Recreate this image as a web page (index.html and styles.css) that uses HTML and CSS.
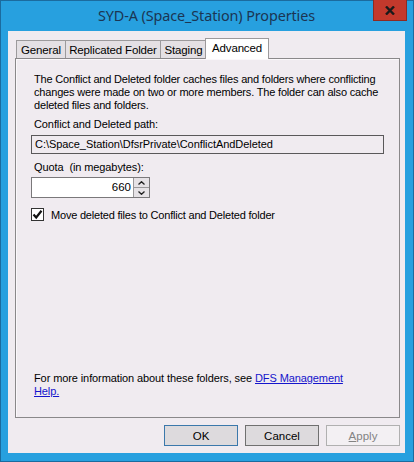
FILE: index.html
```html
<!DOCTYPE html>
<html>
<head>
<meta charset="utf-8">
<link rel="stylesheet" href="styles.css">
</head>
<body>
<div class="window">
  <div class="titlebar">
    <div class="title">SYD-A (Space_Station) Properties</div>
    <div class="close">
      <svg width="10" height="9" viewBox="0 0 10 9"><path d="M1 0.5 L9 8.5 M9 0.5 L1 8.5" stroke="#1a1a1a" stroke-width="2.4" fill="none"/></svg>
    </div>
  </div>
  <div class="client">
    <div class="tabs">
      <div class="tab t-general">General</div>
      <div class="tab t-repl">Replicated Folder</div>
      <div class="tab t-staging">Staging</div>
      <div class="tab active t-adv">Advanced</div>
    </div>
    <div class="panel">
      <p class="desc">The Conflict and Deleted folder caches files and folders where conflicting<br>changes were made on two or more members. The folder can also cache<br>deleted files and folders.</p>
      <div class="label path-label">Conflict and Deleted path:</div>
      <div class="path">C:\Space_Station\DfsrPrivate\ConflictAndDeleted</div>
      <div class="label quota-label">Quota  (in megabytes):</div>
      <div class="spin">
        <div class="spin-input">660</div>
        <div class="spin-btns">
          <div class="spin-btn"><svg width="7" height="4" viewBox="0 0 7 4"><path d="M0.5 3.5 L3.5 0.7 L6.5 3.5" stroke="#222" stroke-width="1.3" fill="none"/></svg></div>
          <div class="spin-btn"><svg width="7" height="4" viewBox="0 0 7 4"><path d="M0.5 0.5 L3.5 3.3 L6.5 0.5" stroke="#222" stroke-width="1.3" fill="none"/></svg></div>
        </div>
      </div>
      <div class="check">
        <span class="box"><svg width="11" height="11" viewBox="0 0 11 11"><path d="M1.5 5.5 L4.2 8.5 L9.5 1.8" stroke="#111" stroke-width="2.2" fill="none"/></svg></span>
        <span class="check-label">Move deleted files to Conflict and Deleted folder</span>
      </div>
      <div class="spacer"></div>
      <p class="footer">For more information about these folders, see <a class="link">DFS Management<br>Help.</a></p>
    </div>
    <div class="buttons">
      <div class="btn default">OK</div>
      <div class="btn">Cancel</div>
      <div class="btn disabled"><u>A</u>pply</div>
    </div>
  </div>
</div>
</body>
</html>
```
FILE: styles.css
```css
html, body {
  margin: 0;
  padding: 0;
  background: #26a0df;
}
.window {
  width: 414px;
  height: 462px;
  box-sizing: border-box;
  background: #27a0df;
  border: 1px solid #1b6b9e;
  padding: 0 8px 0 7px;
  display: flex;
  flex-direction: column;
  font-family: "Liberation Sans", Arial, sans-serif;
  font-size: 11px;
  color: #000;
  white-space: nowrap;
}
.titlebar {
  height: 30px;
  position: relative;
  display: flex;
  align-items: center;
  justify-content: center;
}
.title {
  font-family: "Noto Sans", "Open Sans", sans-serif;
  font-size: 14.4px;
  color: #1b3553;
  margin-top: -2px;
  letter-spacing: -0.1px;
}
.close {
  position: absolute;
  right: -2px;
  top: -1px;
  width: 34px;
  height: 21px;
  box-sizing: border-box;
  background: #c3392c;
  border: 1px solid #8e2a22;
  border-top: none;
  display: flex;
  align-items: center;
  justify-content: center;
}
.client {
  height: 422px;
  background: #f0ebf0;
  display: flex;
  flex-direction: column;
}
.tabs {
  height: 20px;
  margin-top: 7px;
  padding-left: 8px;
  display: flex;
  align-items: flex-end;
}
.tab {
  height: 18px;
  box-sizing: border-box;
  border: 1px solid #9c9a9c;
  border-bottom: none;
  background: #e4e0e4;
  display: flex;
  align-items: center;
  justify-content: center;
  font-size: 11.5px;
  letter-spacing: -0.15px;
  padding-top: 1px;
}
.t-general { width: 50px; }
.t-repl { width: 96px; margin-left: -1px; }
.t-staging { width: 47px; margin-left: -1px; }
.t-adv {
  width: 64px;
  margin-left: -2px;
}
.tab.active {
  height: 21px;
  margin-bottom: -1px;
  background: #fff;
  position: relative;
  z-index: 1;
  padding-top: 0;
  padding-bottom: 3px;
}
.panel {
  margin-left: 7px;
  width: 385px;
  height: 360px;
  box-sizing: border-box;
  border: 1px solid #8a888a;
  background: #f0ebf0;
  padding: 14px 15px 19px 15px;
  display: flex;
  flex-direction: column;
  box-shadow: inset 1px 1px 0 #fbf8fb;
}
.desc {
  margin: 0 0 0 3px;
  line-height: 13px;
  letter-spacing: -0.18px;
}
.label {
  margin-left: 3px;
  line-height: 13px;
  letter-spacing: -0.1px;
}
.path-label { margin-top: 6px; }
.path {
  margin-top: 4px;
  height: 19px;
  box-sizing: border-box;
  border: 1px solid #5a585a;
  padding: 0 3px;
  line-height: 17px;
  background: #f0ebf0;
  letter-spacing: -0.05px;
}
.quota-label {
  margin-top: 7px;
  white-space: pre;
}
.spin {
  margin-top: 3px;
  display: flex;
  width: 119px;
  height: 21px;
  box-sizing: border-box;
  border: 1px solid #7a787a;
  background: #fff;
}
.spin-input {
  flex: 1;
  text-align: right;
  line-height: 19px;
  padding-right: 2px;
  font-size: 11.5px;
}
.spin-btns {
  width: 15px;
  display: flex;
  flex-direction: column;
  border-left: 1px solid #9a989a;
}
.spin-btn {
  flex: 1;
  background: #e6e2e6;
  display: flex;
  align-items: center;
  justify-content: center;
}
.spin-btn + .spin-btn { border-top: 1px solid #9a989a; }
.check {
  margin-top: 10px;
  display: flex;
  align-items: center;
}
.box {
  width: 13px;
  height: 13px;
  box-sizing: border-box;
  border: 1px solid #333;
  background: #fff;
  display: flex;
  align-items: center;
  justify-content: center;
}
.check-label {
  margin-left: 7px;
  letter-spacing: -0.2px;
}
.spacer { flex: 1; }
.footer {
  margin: 0 0 0 3px;
  line-height: 13px;
  letter-spacing: -0.1px;
}
.link {
  color: #1515cc;
  text-decoration: underline;
}
.buttons {
  margin-top: 7px;
  height: 21px;
  display: flex;
  justify-content: flex-end;
  gap: 7px;
  padding-right: 5px;
}
.btn {
  width: 74px;
  height: 21px;
  box-sizing: border-box;
  border: 1px solid #707070;
  background: #dddadd;
  display: flex;
  align-items: center;
  justify-content: center;
  font-size: 11.5px;
}
.btn.default {
  border-color: #3b78ab;
}
.btn.disabled {
  border-color: #b0b0b0;
  background: #f3f0f3;
  color: #838383;
}
```
